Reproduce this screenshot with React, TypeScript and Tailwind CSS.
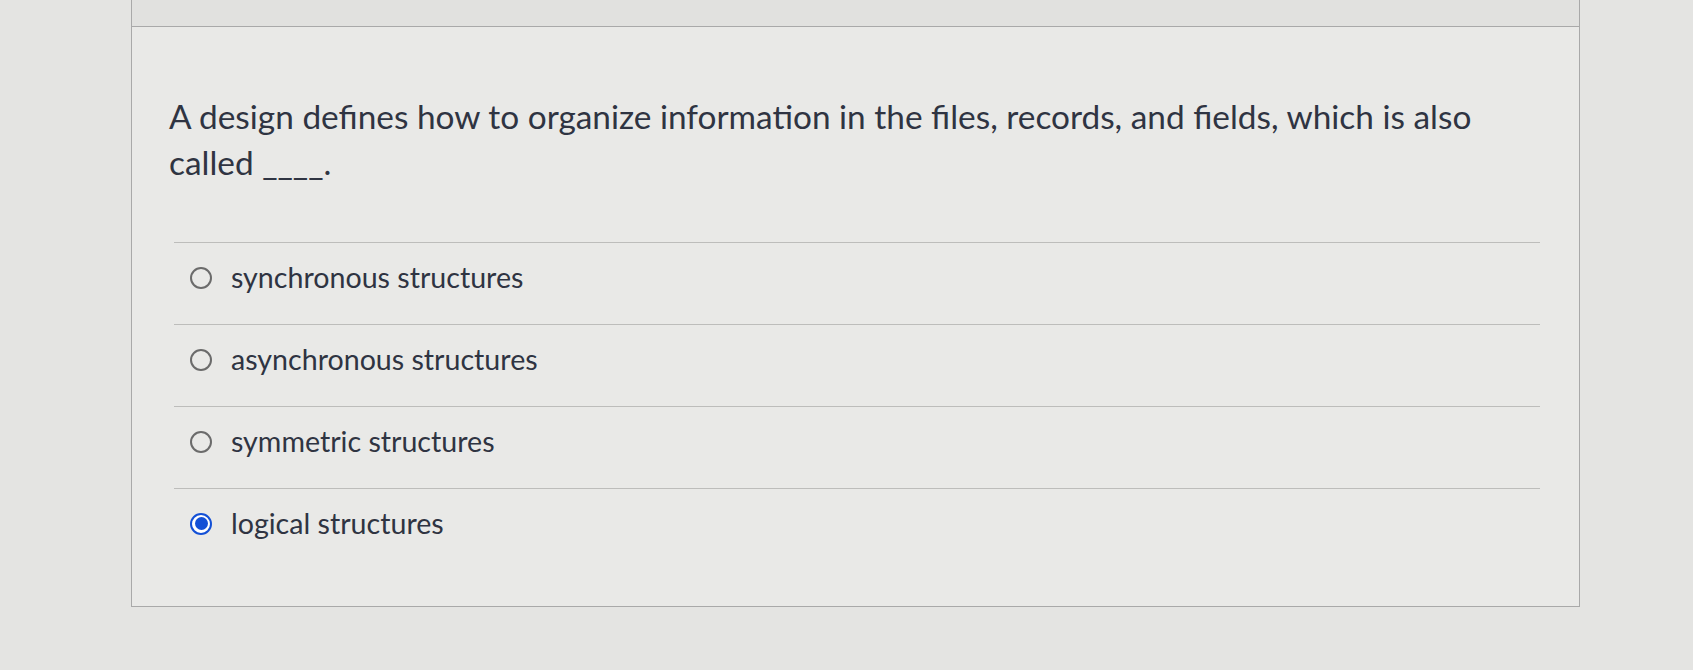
import React from 'react'

const options = [
  { label: 'synchronous structures', checked: false },
  { label: 'asynchronous structures', checked: false },
  { label: 'symmetric structures', checked: false },
  { label: 'logical structures', checked: true },
]

const Radio = ({ checked }: { checked: boolean }) => {
  if (checked) {
    return (
      <span className="flex h-[22px] w-[22px] shrink-0 items-center justify-center rounded-full border-2 border-[#1350d6] bg-white">
        <span className="h-[13px] w-[13px] rounded-full bg-[#1350d6]" />
      </span>
    )
  }
  return <span className="h-[22px] w-[22px] shrink-0 rounded-full border-2 border-[#6b6b6b]" />
}

const App = () => {
  return (
    <div className="h-[670px] w-full overflow-hidden bg-[#e4e4e2] pl-[131px] font-['Lato','Liberation_Sans',sans-serif] text-[#2f3442]">
      <div className="h-[27px] w-[1449px] border-x border-b border-[#a9a9a9] bg-[#e1e1df]" />
      <section className="h-[580px] w-[1449px] border-x border-b border-[#a9a9a9] bg-[#e9e9e7] pl-[37px] pt-[66px]">
        <p className="w-[1340px] text-[33.4px] leading-[46px]">
          A design defines how to organize information in the files, records, and fields, which is also called ____.
        </p>
        <div className="mt-[57px] ml-[5px] w-[1366px]">
          {options.map((o) => (
            <div key={o.label} className="flex h-[82px] items-center gap-[19px] border-t border-[#bdbdbb] pb-[12px] pl-[16px]">
              <Radio checked={o.checked} />
              <span className="text-[28.6px] leading-none">{o.label}</span>
            </div>
          ))}
        </div>
      </section>
    </div>
  )
}

export default App
